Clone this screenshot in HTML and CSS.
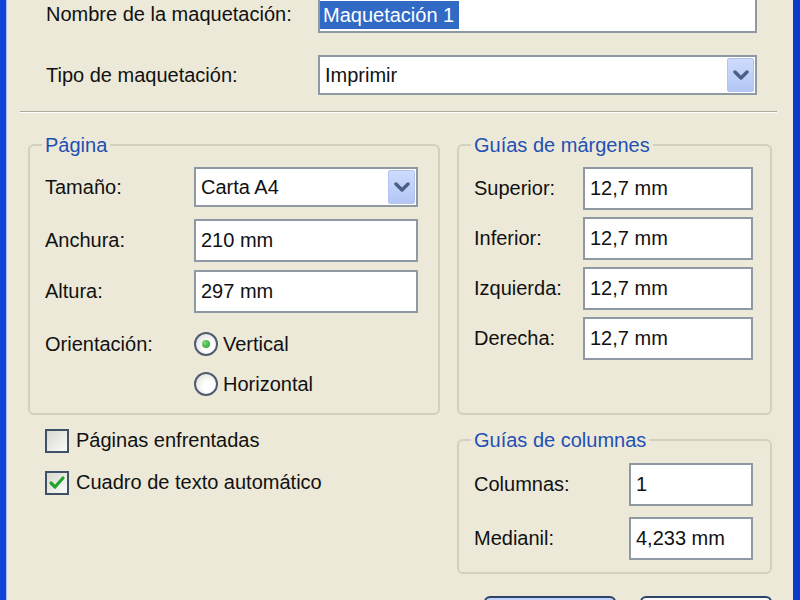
FILE: index.html
```html
<!DOCTYPE html>
<html lang="es">
<head>
    <meta charset="UTF-8">
    <title>Nueva maquetación</title>
    <link rel="stylesheet" href="styles.css">
</head>
<body>
    <div class="window">
        <div class="dialog">
            <div class="head">
                <label class="lbl">Nombre de la maquetación:</label>
                <div class="field name-field"><span class="sel-text">Maquetación 1</span></div>
                <label class="lbl">Tipo de maquetación:</label>
                <div class="field combo">
                    <span>Imprimir</span>
                    <span class="drop"><svg width="16" height="10" viewBox="0 0 16 10"><polyline points="2,2 8,8 14,2" fill="none" stroke="#4b5f86" stroke-width="3.4" stroke-linecap="round" stroke-linejoin="round"/></svg></span>
                </div>
            </div>

            <div class="sep"></div>

            <div class="groups">
                <fieldset class="group page">
                    <legend>Página</legend>
                    <div class="row">
                        <label class="lbl">Tamaño:</label>
                        <div class="field combo">
                            <span>Carta A4</span>
                            <span class="drop"><svg width="16" height="10" viewBox="0 0 16 10"><polyline points="2,2 8,8 14,2" fill="none" stroke="#4b5f86" stroke-width="3.4" stroke-linecap="round" stroke-linejoin="round"/></svg></span>
                        </div>
                    </div>
                    <div class="row r-wide">
                        <label class="lbl">Anchura:</label>
                        <div class="field">210 mm</div>
                    </div>
                    <div class="row">
                        <label class="lbl">Altura:</label>
                        <div class="field">297 mm</div>
                    </div>
                    <div class="row orient">
                        <label class="lbl">Orientación:</label>
                        <div class="radios">
                            <div class="opt"><span class="radio checked"></span>Vertical</div>
                            <div class="opt"><span class="radio"></span>Horizontal</div>
                        </div>
                    </div>
                </fieldset>

                <fieldset class="group margins">
                    <legend>Guías de márgenes</legend>
                    <div class="row">
                        <label class="lbl">Superior:</label>
                        <div class="field">12,7 mm</div>
                    </div>
                    <div class="row">
                        <label class="lbl">Inferior:</label>
                        <div class="field">12,7 mm</div>
                    </div>
                    <div class="row">
                        <label class="lbl">Izquierda:</label>
                        <div class="field">12,7 mm</div>
                    </div>
                    <div class="row">
                        <label class="lbl">Derecha:</label>
                        <div class="field">12,7 mm</div>
                    </div>
                </fieldset>

                <div class="checks">
                    <div class="chk"><span class="box"></span>Páginas enfrentadas</div>
                    <div class="chk"><span class="box"><svg width="20" height="20" viewBox="0 0 20 20"><polyline points="4,10 8,14 16,5" fill="none" stroke="#22a32a" stroke-width="3.2" stroke-linecap="round" stroke-linejoin="round"/></svg></span>Cuadro de texto automático</div>
                </div>

                <fieldset class="group columns">
                    <legend>Guías de columnas</legend>
                    <div class="row">
                        <label class="lbl">Columnas:</label>
                        <div class="field">1</div>
                    </div>
                    <div class="row">
                        <label class="lbl">Medianil:</label>
                        <div class="field">4,233 mm</div>
                    </div>
                </fieldset>
            </div>

            <div class="buttons">
                <button class="btn default" title="Aceptar"></button>
                <button class="btn" title="Cancelar"></button>
            </div>
        </div>
    </div>
</body>
</html>
```

FILE: styles.css
```css
body {
    margin: 0;
    font-family: "Liberation Sans", Arial, sans-serif;
    font-size: 20px;
    color: #111;
    background: #ece9d8;
    overflow: hidden;
}
.window {
    display: flex;
    height: 600px;
    box-sizing: border-box;
    overflow: hidden;
    background: #ece9d8;
    border-left: 6px solid #0b44d6;
    border-right: 7px solid #0a3bcc;
    box-shadow: inset 1px 0 0 #a9c0f2;
}
.dialog {
    flex: 1;
    padding: 0 23px 0 22px;
}
.lbl {
    white-space: nowrap;
}
.head {
    display: grid;
    grid-template-columns: 272px 1fr;
    row-gap: 22px;
    align-items: center;
    padding: 0 15px 0 18px;
    margin-top: -4px;
}
.field {
    flex: 1;
    box-sizing: border-box;
    height: 43px;
    display: flex;
    align-items: center;
    padding: 0 5px;
    background: #fff;
    border: 2px solid #8e99a4;
    white-space: nowrap;
}
.head .name-field {
    height: 37px;
    padding-left: 0;
}
.sel-text {
    background: #316ac5;
    color: #fff;
    line-height: 28px;
    padding: 0 5px 0 3px;
}
.combo {
    height: 40px;
    justify-content: space-between;
    padding-right: 1px;
}
.combo .drop {
    width: 27px;
    height: 34px;
    box-sizing: border-box;
    display: flex;
    align-items: center;
    justify-content: center;
    background: linear-gradient(#cddcfd, #b3c7f5);
    border: 1px solid #b2c4ee;
    border-radius: 2px;
}
.sep {
    margin: 16px -5px 0 -8px;
    border-top: 1px solid #aca899;
    border-bottom: 1px solid #fff;
}
.groups {
    display: grid;
    grid-template-columns: 412px 315px;
    column-gap: 17px;
    row-gap: 13px;
    margin-top: 20px;
}
.group {
    margin: 0;
    min-width: 0;
    border: 2px solid #d3d0bf;
    border-radius: 6px;
}
.group legend {
    color: #1f50b3;
    line-height: 24px;
    padding: 0 3px;
    margin-left: -3px;
}
.row {
    display: flex;
    align-items: center;
}
.page {
    padding: 10px 20px 14px 15px;
}
.page .lbl {
    width: 149px;
}
.page .row + .row {
    margin-top: 8px;
}
.page .row.r-wide {
    margin-top: 12px;
}
.page .row.orient {
    margin-top: 16px;
    align-items: flex-start;
}
.orient .lbl {
    line-height: 30px;
}
.radios {
    display: flex;
    flex-direction: column;
    gap: 10px;
}
.opt {
    display: flex;
    align-items: center;
    gap: 5px;
    height: 30px;
}
.radio {
    width: 24px;
    height: 24px;
    box-sizing: border-box;
    border: 2px solid #4d5d70;
    border-radius: 50%;
    background: radial-gradient(circle at 65% 65%, #fff 30%, #d9d8d0);
    display: flex;
    align-items: center;
    justify-content: center;
}
.radio.checked::after {
    content: "";
    width: 8px;
    height: 8px;
    border-radius: 50%;
    background: radial-gradient(circle at 35% 35%, #7fd97a, #1f9d24);
}
.margins {
    padding: 10px 17px 10px 15px;
}
.margins .lbl {
    width: 109px;
}
.margins .row + .row {
    margin-top: 7px;
}
.checks {
    padding-left: 17px;
    display: flex;
    flex-direction: column;
    gap: 17px;
}
.chk {
    display: flex;
    align-items: center;
    gap: 7px;
    height: 25px;
}
.box {
    width: 24px;
    height: 24px;
    box-sizing: border-box;
    border: 2px solid #3f5166;
    background: linear-gradient(135deg, #d8d8d1, #fbfbf9);
    display: flex;
    align-items: center;
    justify-content: center;
}
.columns {
    padding: 11px 17px 12px 15px;
}
.columns .lbl {
    width: 155px;
}
.columns .row + .row {
    margin-top: 11px;
}
.buttons {
    display: flex;
    justify-content: flex-end;
    gap: 24px;
    margin-top: 22px;
}
.btn {
    width: 132px;
    height: 40px;
    font: inherit;
    color: #000;
    background: linear-gradient(#fdfdfb, #ecebe5);
    border: 2px solid #2b4468;
    border-radius: 6px;
}
.btn.default {
    box-shadow: inset 0 2px 0 #c1d3fb, inset 2px 0 0 #8eaaf0, inset -2px 0 0 #8eaaf0;
}
```
